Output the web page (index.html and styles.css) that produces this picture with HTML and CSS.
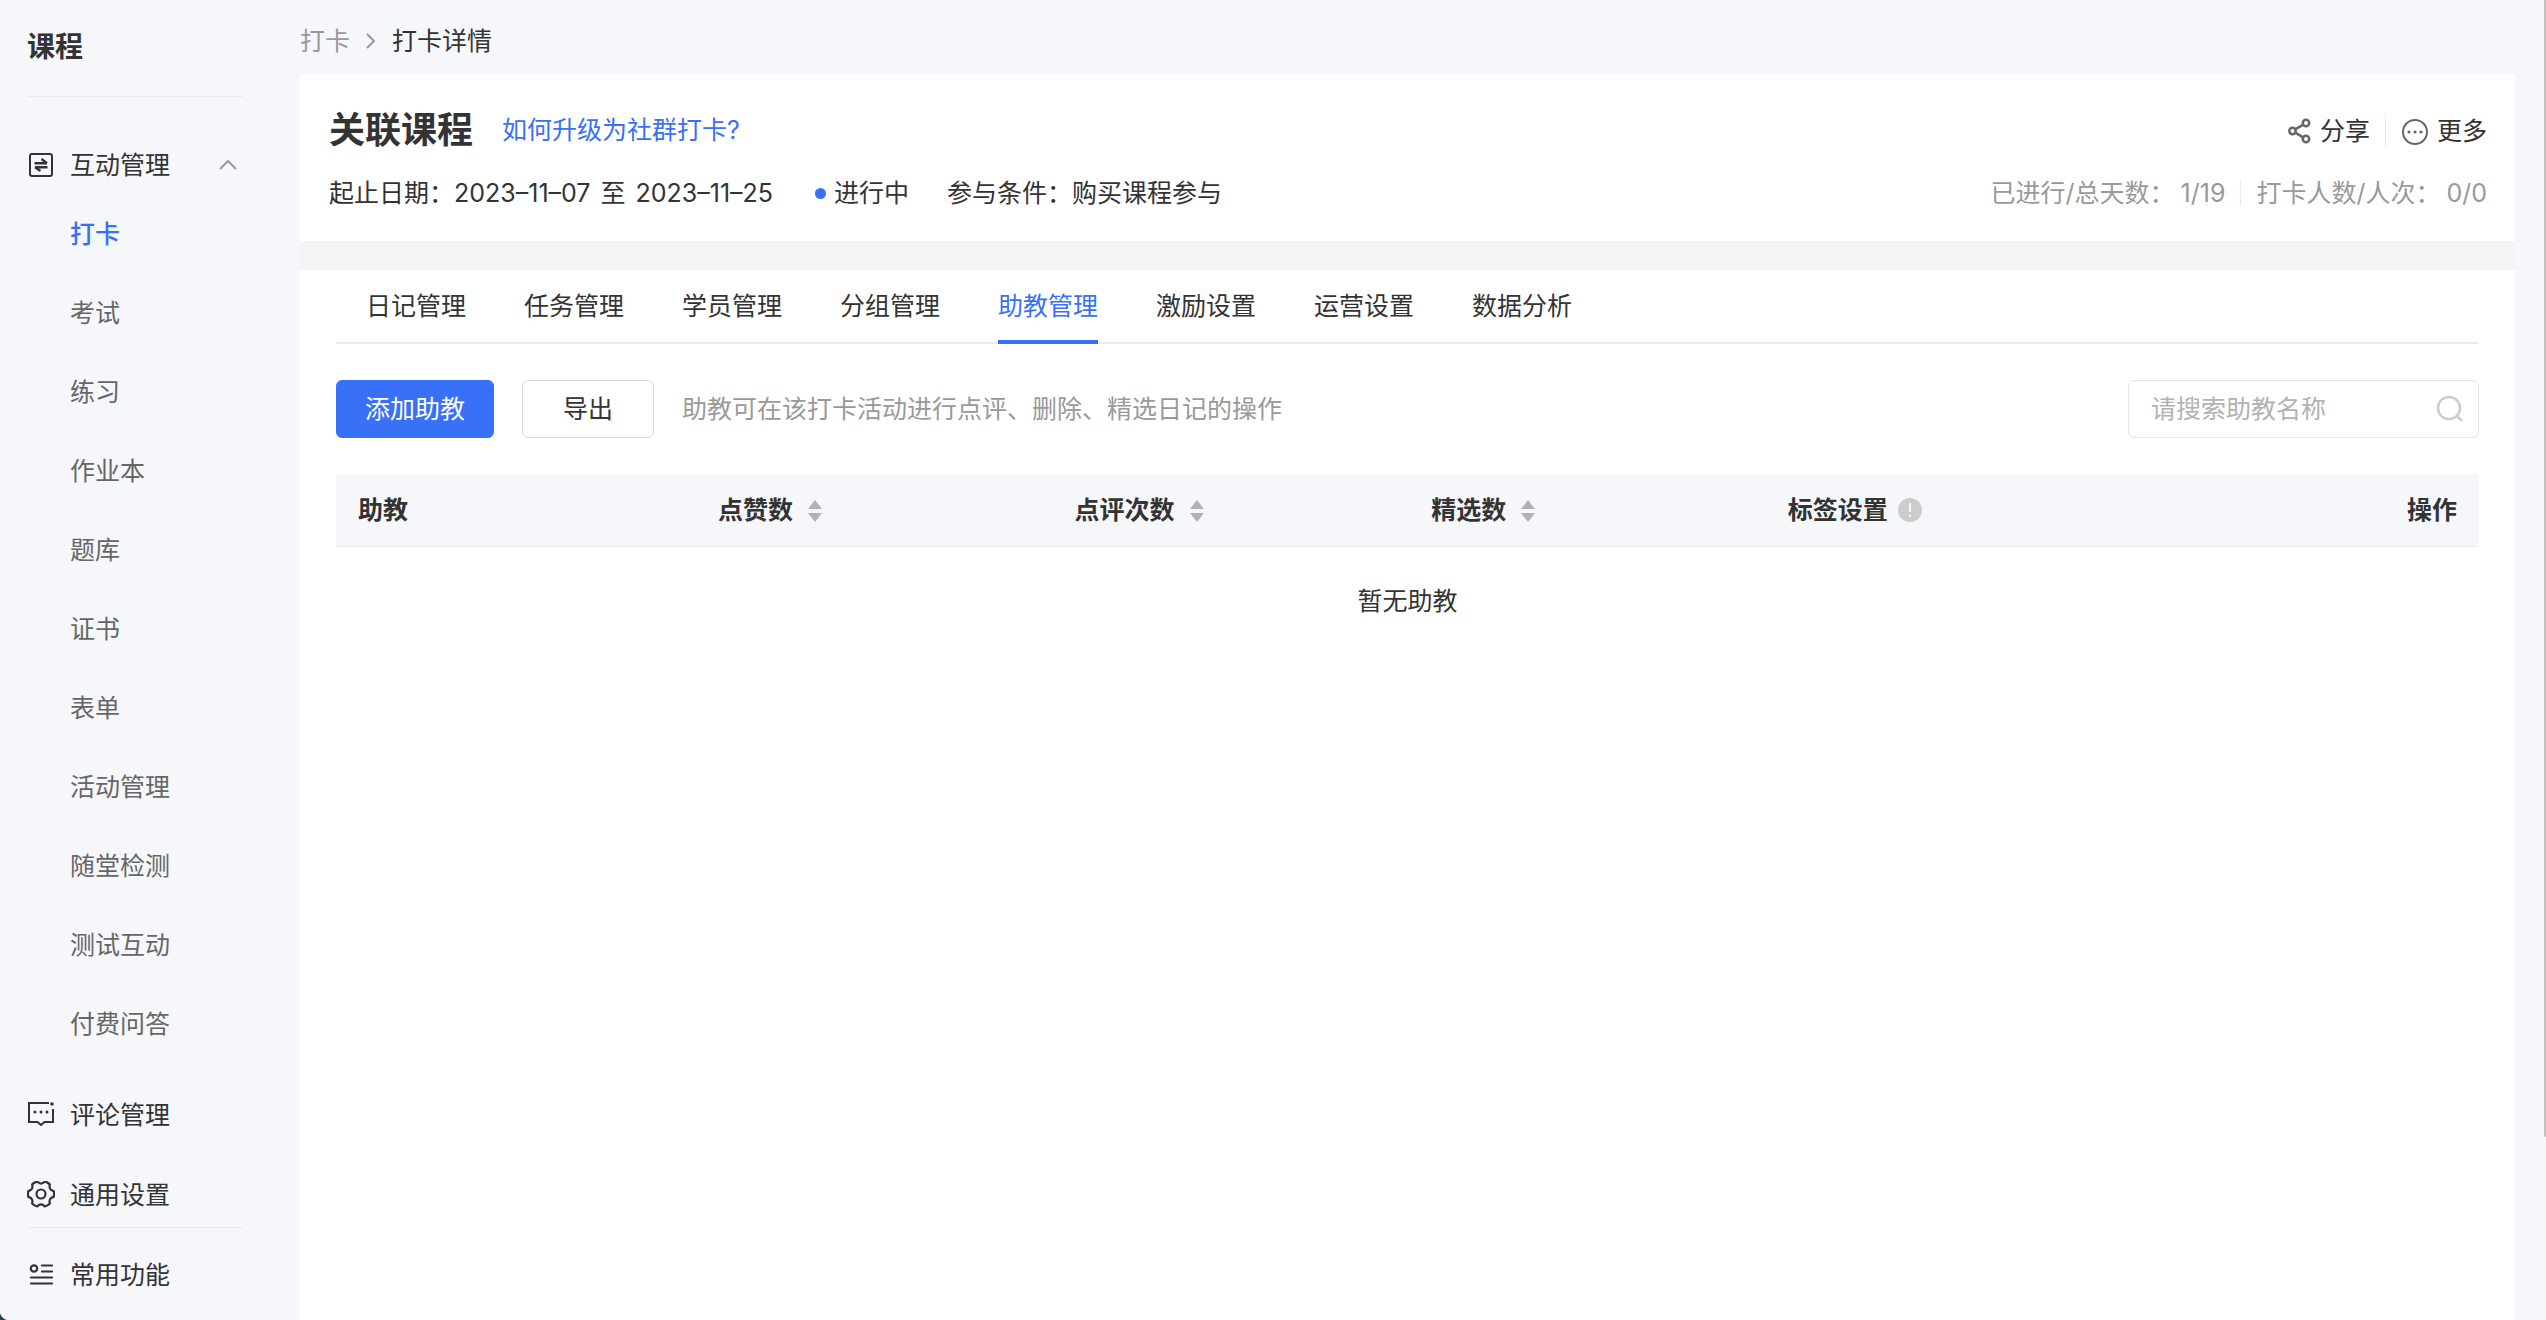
FILE: index.html
```html
<!DOCTYPE html>
<html lang="zh-CN">
<head>
<meta charset="utf-8">
<meta name="viewport" content="width=device-width, initial-scale=1">
<title>打卡详情</title>
<link rel="stylesheet" href="styles.css">
</head>
<body>
<div class="app">
  <aside class="sidebar">
    <h2 class="sidebar-title">课程</h2>
    <nav class="menu" aria-label="课程">
      <button class="group" type="button" aria-expanded="true">
        <svg class="icon" viewBox="0 0 28 28" fill="none" stroke="#333" stroke-width="2" stroke-linejoin="round"><rect x="3" y="3" width="22" height="22" rx="2"/><path d="M7.500 12.200H20M14.500 8L20 12.200M20.500 16.200H8M8 16.200L13.500 20" stroke-width="2.400"/></svg>
        <span class="group-name">互动管理</span>
        <svg class="caret" viewBox="0 0 18 12" fill="none" stroke="#999" stroke-width="2"><path d="M1 10L9 2l8 8"/></svg>
      </button>
      <a class="item active" href="#" aria-current="page">打卡</a>
      <a class="item" href="#">考试</a>
      <a class="item" href="#">练习</a>
      <a class="item" href="#">作业本</a>
      <a class="item" href="#">题库</a>
      <a class="item" href="#">证书</a>
      <a class="item" href="#">表单</a>
      <a class="item" href="#">活动管理</a>
      <a class="item" href="#">随堂检测</a>
      <a class="item" href="#">测试互动</a>
      <a class="item" href="#">付费问答</a>
      <a class="group comments" href="#">
        <svg class="icon" viewBox="0 0 28 28" fill="none" stroke="#333" stroke-width="2"><path d="M22 2H2v19h8.500l3.500 3 3.500-3H26V8"/><g fill="#333" stroke="none"><circle cx="25" cy="3" r="1.800"/><circle cx="8" cy="11" r="1.500"/><circle cx="14" cy="11" r="1.500"/><circle cx="20" cy="11" r="1.500"/></g></svg>
        <span class="group-name">评论管理</span>
      </a>
      <a class="group" href="#">
        <svg class="icon" viewBox="0 1 28 28" fill="none" stroke="#333" stroke-width="2.200" stroke-linejoin="round"><path d="M10.200 1.600Q14 5.500 17.800 1.600Q20.800 2.200 22.900 4.500Q21.400 9.700 26.700 11.100Q27.400 14 26.700 16.900Q21.400 18.300 22.900 23.500Q20.800 25.800 17.800 26.400Q14 22.500 10.200 26.400Q7.200 25.800 5.100 23.500Q6.600 18.300 1.300 16.900Q.600 14 1.300 11.100Q6.600 9.700 5.100 4.500Q7.200 2.200 10.200 1.600z"/><circle cx="14" cy="14" r="4.500"/></svg>
        <span class="group-name">通用设置</span>
      </a>
    </nav>
    <a class="group common" href="#">
      <svg class="icon" viewBox="0 0 28 28" fill="none" stroke="#333" stroke-width="2.200" stroke-linecap="round"><circle cx="7" cy="7.500" r="3.200"/><path d="M15 4.500h10M15 10.500h10M4 16.500h21M4 22.500h21"/></svg>
      <span class="group-name">常用功能</span>
    </a>
  </aside>

  <main class="main">
    <nav class="crumbs" aria-label="面包屑">
      <a href="#">打卡</a>
      <svg viewBox="0 0 10 16" fill="none" stroke="#999" stroke-width="2"><path d="M1 1l7 7-7 7"/></svg>
      <span>打卡详情</span>
    </nav>

    <header class="summary">
      <div class="row">
        <h1>关联课程</h1>
        <a class="help" href="#">如何升级为社群打卡?</a>
        <div class="actions">
          <button type="button"><svg class="share" viewBox="0 0 24 28" fill="none" stroke="#666" stroke-width="2.500"><circle cx="4.500" cy="14" r="3.200"/><circle cx="18" cy="6" r="3.200"/><circle cx="18" cy="22" r="3.200"/><path d="M7.200 12.400l8-4.800M7.200 15.600l8 4.800"/></svg>分享</button>
          <button type="button"><svg class="more" viewBox="0 -1 28 28" fill="none" stroke="#666" stroke-width="2"><circle cx="14" cy="14" r="12"/><g fill="#666" stroke="none"><circle cx="8" cy="14" r="1.600"/><circle cx="14" cy="14" r="1.600"/><circle cx="20" cy="14" r="1.600"/></g></svg>更多</button>
        </div>
      </div>
      <div class="row facts">
        <div class="period"><span>起止日期：<time datetime="2023-11-07">2023–11–07</time></span> <span>至</span> <time datetime="2023-11-25">2023–11–25</time></div>
        <span class="status">进行中</span>
        <span>参与条件：购买课程参与</span>
        <dl class="stats">
          <div><dt>已进行/总天数：</dt><dd>1/19</dd></div>
          <div><dt>打卡人数/人次：</dt><dd>0/0</dd></div>
        </dl>
      </div>
    </header>

    <section class="panel">
      <nav class="tabs" aria-label="打卡管理">
        <a href="#">日记管理</a>
        <a href="#">任务管理</a>
        <a href="#">学员管理</a>
        <a href="#">分组管理</a>
        <a class="current" href="#" aria-current="page">助教管理</a>
        <a href="#">激励设置</a>
        <a href="#">运营设置</a>
        <a href="#">数据分析</a>
      </nav>
      <div class="toolbar">
        <button class="btn primary" type="button">添加助教</button>
        <button class="btn" type="button">导出</button>
        <p class="hint">助教可在该打卡活动进行点评、删除、精选日记的操作</p>
        <label class="search">
          <input type="search" placeholder="请搜索助教名称" aria-label="请搜索助教名称">
          <svg viewBox="0 0 28 28" fill="none" stroke="#ccc" stroke-width="2.500"><circle cx="13" cy="13" r="11"/><path d="M20.500 20.500l5.500 5.500"/></svg>
        </label>
      </div>
      <table class="table">
        <thead>
          <tr>
            <th class="first">助教</th>
            <th>点赞数<svg class="sort" viewBox="0 0 14 22" fill="#b2b2b2"><path d="M7 0l7 9H0zM7 22l7-9H0z"/></svg></th>
            <th>点评次数<svg class="sort" viewBox="0 0 14 22" fill="#b2b2b2"><path d="M7 0l7 9H0zM7 22l7-9H0z"/></svg></th>
            <th>精选数<svg class="sort" viewBox="0 0 14 22" fill="#b2b2b2"><path d="M7 0l7 9H0zM7 22l7-9H0z"/></svg></th>
            <th>标签设置<svg class="info" viewBox="0 0 24 24"><circle cx="12" cy="12" r="12" fill="#ccc"/><path d="M12 5v9M12 16.500v2.500" stroke="#f5f7fb" stroke-width="2"/></svg></th>
            <th class="last">操作</th>
          </tr>
        </thead>
        <tbody>
          <tr><td colspan="6">暂无助教</td></tr>
        </tbody>
      </table>
    </section>
  </main>
</div>
<div class="scroll-thumb"></div>
<div class="window-corner"></div>
</body>
</html>
```
FILE: styles.css
```css
* { box-sizing: border-box; }

body {
  margin: 0;
  background: #f5f7fb;
  color: #333;
  font: 25px/36px Inter, "Noto Sans CJK SC", sans-serif;
}

a { color: inherit; text-decoration: none; }
button { padding: 0; border: 0; background: none; color: inherit; font: inherit; cursor: pointer; }
svg { flex: none; display: block; }
h1, h2, p, dl, dd { margin: 0; }

.app { display: flex; min-height: 100vh; }

/* Sidebar */
.sidebar { flex: none; display: flex; flex-direction: column; width: 300px; padding: 0 57px 0 27px; }
.sidebar-title { height: 97px; padding-top: 27px; border-bottom: 1px solid #ebebeb; font-size: 28px; line-height: 40px; font-weight: 700; }
.menu { display: flex; flex-direction: column; padding: 44px 0 8px; }
.group { display: flex; align-items: center; width: 100%; height: 48px; text-align: left; }
.icon { width: 28px; height: 28px; }
.group-name { flex: 1; padding-left: 15px; }
.caret { width: 18px; height: 12px; margin-right: 6px; }
.item { margin-left: 43px; padding: 22px 0; line-height: 35px; color: #666; }
.item.active { padding-top: 28px; color: #3870f7; font-weight: 500; }
.comments { margin: 27px 0 32px; }
.common { height: 92px; padding-top: 3px; border-top: 1px solid #ebebeb; }

/* Breadcrumb */
.main { flex: 1; display: flex; flex-direction: column; min-width: 0; padding-right: 31px; }
.crumbs { display: flex; align-items: center; gap: 16px; height: 74px; padding-top: 16px; padding-bottom: 8px; }
.crumbs a { color: #999; }
.crumbs svg { width: 10px; height: 16px; }

/* Summary */
.summary { height: 167px; padding: 29px 28px 0 29px; background: #fff; }
.row { display: flex; align-items: center; }
h1 { font-size: 36px; line-height: 54px; font-weight: 700; }
.help { margin-left: 29px; color: #3870f7; }
.actions { display: flex; margin-left: auto; padding-top: 2px; }
.actions button { display: flex; align-items: center; gap: 8px; height: 34px; }
.actions button + button { margin-left: 15px; padding-left: 15px; border-left: 1px solid #ebebeb; }
.share { width: 24px; height: 28px; }
.more { width: 28px; height: 28px; }
.facts { padding-top: 18px; }
.period { display: flex; gap: 10px; }
.status { display: flex; align-items: center; gap: 8px; margin: 0 38px 0 42px; }
.status::before { content: ""; width: 11px; height: 11px; border-radius: 50%; background: #3870f7; }
.stats { display: flex; align-items: center; margin-left: auto; color: #999; line-height: 26px; }
.stats div { display: flex; gap: 6px; }
.stats div + div { margin-left: 15px; padding-left: 15px; border-left: 1px solid #ebebeb; }

/* Panel */
.panel { flex: 1; margin-top: 29px; padding: 0 36px; background: #fff; box-shadow: 0 -29px #f4f4f4; }
.tabs { display: flex; gap: 58px; height: 74px; padding-left: 30px; border-bottom: 2px solid #ebebeb; }
.tabs a { height: 74px; padding-top: 18px; border-bottom: 4px solid transparent; }
.tabs .current { color: #3870f7; border-color: #3870f7; }
.toolbar { display: flex; align-items: center; padding: 36px 0; }
.btn { height: 58px; padding: 0 40px; border: 1px solid #dcdcdc; border-radius: 6px; background: #fff; }
.primary { margin-right: 28px; padding: 0 28px; border-color: #3870f7; background: #3870f7; color: #fff; }
.hint { margin-left: 28px; color: #999; }
.search { display: flex; align-items: center; width: 351px; height: 58px; margin-left: auto; padding: 0 14px 0 22px; border: 1px solid #e5e5e5; border-radius: 6px; }
.search input { flex: 1; min-width: 0; padding: 0; border: 0; outline: 0; background: none; color: #333; font: inherit; }
.search input::placeholder { color: #b2b2b2; }
.search svg { width: 28px; height: 28px; }

.table { width: 100%; border-collapse: collapse; table-layout: fixed; }
.table th { height: 72px; padding: 0 22px; border-bottom: 1px solid #e9ebf0; background: #f5f7fb; text-align: left; font-weight: 700; white-space: nowrap; }
.table .first { width: 360px; }
.table .last { text-align: right; }
.table td { padding: 36px 0; text-align: center; }
.sort { display: inline-block; width: 14px; height: 22px; margin-left: 15px; vertical-align: -3px; }
.info { display: inline-block; width: 24px; height: 24px; margin-left: 10px; vertical-align: -3px; }

/* Overlays on the window edge */
.scroll-thumb { position: fixed; top: 0; right: 0; width: 2px; height: 1137px; border-bottom-left-radius: 2px; background: #c1c1c1; }
.window-corner { position: fixed; left: 0; bottom: 0; width: 10px; height: 10px; background: radial-gradient(circle at 100% 0, transparent 10px, #2c4356 11px); }
```
